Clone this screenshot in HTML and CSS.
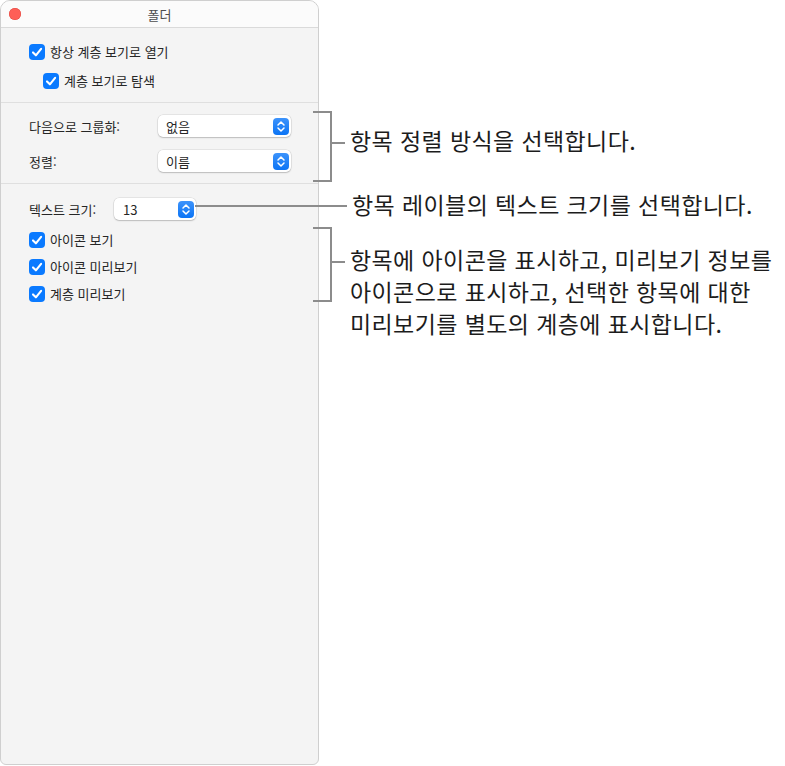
FILE: index.html
```html
<!DOCTYPE html>
<html lang="ko">
<head>
    <meta charset="UTF-8">
    <meta name="viewport" content="width=device-width, initial-scale=1.0">
    <title>폴더</title>
    <link rel="stylesheet" href="styles.css">
</head>
<body>
    <div class="stage">
        <div class="window">
            <div class="titlebar">
                <span class="close"></span>
                <span class="title">폴더</span>
                <span></span>
            </div>

            <div class="section first">
                <label class="check">
                    <span class="box"><svg viewBox="0 0 16 16"><path d="M4 8.4 L6.9 11.3 L12.1 4.9"/></svg></span>
                    항상 계층 보기로 열기
                </label>
                <label class="check indent">
                    <span class="box"><svg viewBox="0 0 16 16"><path d="M4 8.4 L6.9 11.3 L12.1 4.9"/></svg></span>
                    계층 보기로 탐색
                </label>
            </div>

            <div class="section fields">
                <span class="label">다음으로 그룹화:</span>
                <div class="popup wide">
                    <span>없음</span>
                    <span class="stepper"><svg viewBox="0 0 16 17"><path d="M5 7 L8 4 L11 7 M5 10 L8 13 L11 10"/></svg></span>
                </div>
                <span class="label">정렬:</span>
                <div class="popup wide">
                    <span>이름</span>
                    <span class="stepper"><svg viewBox="0 0 16 17"><path d="M5 7 L8 4 L11 7 M5 10 L8 13 L11 10"/></svg></span>
                </div>
            </div>

            <div class="section last">
                <div class="size-row">
                    <span class="label">텍스트 크기:</span>
                    <div class="popup narrow">
                        <span>13</span>
                        <span class="stepper"><svg viewBox="0 0 16 17"><path d="M5 7 L8 4 L11 7 M5 10 L8 13 L11 10"/></svg></span>
                    </div>
                </div>
                <label class="check">
                    <span class="box"><svg viewBox="0 0 16 16"><path d="M4 8.4 L6.9 11.3 L12.1 4.9"/></svg></span>
                    아이콘 보기
                </label>
                <label class="check">
                    <span class="box"><svg viewBox="0 0 16 16"><path d="M4 8.4 L6.9 11.3 L12.1 4.9"/></svg></span>
                    아이콘 미리보기
                </label>
                <label class="check">
                    <span class="box"><svg viewBox="0 0 16 16"><path d="M4 8.4 L6.9 11.3 L12.1 4.9"/></svg></span>
                    계층 미리보기
                </label>
            </div>
        </div>

        <!-- callouts -->
        <div class="notes">
            <div class="note note-sort">
                <div class="bracket"></div>
                <div class="note-body">
                    <span class="tick"></span>
                    <p>항목 정렬 방식을 선택합니다.</p>
                </div>
            </div>
            <div class="note note-size">
                <span class="leader"></span>
                <p>항목 레이블의 텍스트 크기를 선택합니다.</p>
            </div>
            <div class="note note-icons">
                <div class="bracket"></div>
                <div class="note-body">
                    <span class="tick"></span>
                    <p>항목에 아이콘을 표시하고, 미리보기 정보를<br>아이콘으로 표시하고, 선택한 항목에 대한<br>미리보기를 별도의 계층에 표시합니다.</p>
                </div>
            </div>
        </div>
    </div>
</body>
</html>
```

FILE: styles.css
```css
body {
    margin: 0;
    padding: 0;
    background-color: #ffffff;
    font-family: "Noto Sans CJK KR", "Noto Sans", sans-serif;
    color: #262626;
}

.stage {
    display: flex;
    align-items: flex-start;
}

.window {
    width: 317px;
    height: 763px;
    border: 1px solid #cfcfcf;
    border-radius: 10px 10px 6px 6px;
    background-color: #f4f4f4;
    overflow: hidden;
}

.titlebar {
    height: 26px;
    display: grid;
    grid-template-columns: 1fr auto 1fr;
    align-items: center;
    background-color: #fbfbfb;
    border-bottom: 1px solid #dadada;
}

.close {
    width: 12px;
    height: 12px;
    margin-left: 8px;
    border-radius: 50%;
    background-color: #fe5f57;
    box-shadow: inset 0 0 0 0.5px #e2463f;
}

.title {
    font-size: 13px;
    color: #4d4d4d;
}

.section {
    padding: 12px 0 11px 28px;
    border-bottom: 1px solid #dfdfdf;
}

.section.first {
    padding-top: 14px;
    display: flex;
    flex-direction: column;
    gap: 9px;
}

.section.last {
    padding-top: 14px;
    border-bottom: none;
    display: flex;
    flex-direction: column;
    gap: 7px;
}

.check {
    display: flex;
    align-items: center;
    gap: 5px;
    height: 20px;
    font-size: 13px;
    line-height: 20px;
}

.check.indent {
    margin-left: 14px;
}

.box {
    width: 16px;
    height: 16px;
    border-radius: 4px;
    background-color: #0a7aff;
    display: flex;
}

.box svg {
    width: 16px;
    height: 16px;
    fill: none;
    stroke: #ffffff;
    stroke-width: 2.1;
    stroke-linecap: round;
    stroke-linejoin: round;
}

.fields {
    display: grid;
    grid-template-columns: 129px 133px;
    row-gap: 13px;
    align-items: center;
}

.label {
    font-size: 13px;
}

.popup {
    height: 22px;
    box-sizing: border-box;
    display: flex;
    align-items: center;
    justify-content: space-between;
    padding: 0 2px 0 8px;
    background-color: #ffffff;
    border-radius: 5px;
    box-shadow: 0 0 0 0.5px rgba(0, 0, 0, 0.12), 0 1px 1.5px rgba(0, 0, 0, 0.18);
    font-size: 13px;
}

.popup.narrow {
    width: 82px;
    padding-left: 9px;
}

.stepper {
    width: 16px;
    height: 17px;
    border-radius: 4px;
    background: linear-gradient(#3d93fb, #0b74f5);
    display: flex;
}

.stepper svg {
    width: 16px;
    height: 17px;
    fill: none;
    stroke: #ffffff;
    stroke-width: 1.5;
    stroke-linecap: round;
    stroke-linejoin: round;
}

.size-row {
    display: flex;
    align-items: center;
    margin-bottom: 3px;
}

.size-row .label {
    width: 85px;
}

/* callouts */
.notes {
    position: relative;
    margin-left: -6px;
    padding-top: 111px;
    display: flex;
    flex-direction: column;
}

.note {
    display: flex;
    align-items: flex-start;
}

.note p {
    margin: 0 0 0 5px;
    font-size: 23px;
    letter-spacing: 0.4px;
    line-height: 32px;
    color: #1c1c1c;
    white-space: nowrap;
}

.bracket {
    width: 17px;
    height: 67px;
    border: 2px solid #8c8c8c;
    border-left: none;
}

.note-body {
    display: flex;
    align-items: flex-start;
    margin-top: 13px;
}

.tick {
    width: 13px;
    height: 2px;
    margin-top: 18px;
    background-color: #8c8c8c;
}

.note-size {
    margin-top: 10px;
    align-items: center;
}

.note-size p {
    margin-top: -4px;
}

.leader {
    width: 152px;
    height: 2px;
    margin-left: -118px;
    background-color: #8c8c8c;
}

.note-icons {
    margin-top: 7px;
}

.note-icons .bracket {
    height: 71px;
}

.note-icons .note-body {
    margin-top: 16px;
}
```
